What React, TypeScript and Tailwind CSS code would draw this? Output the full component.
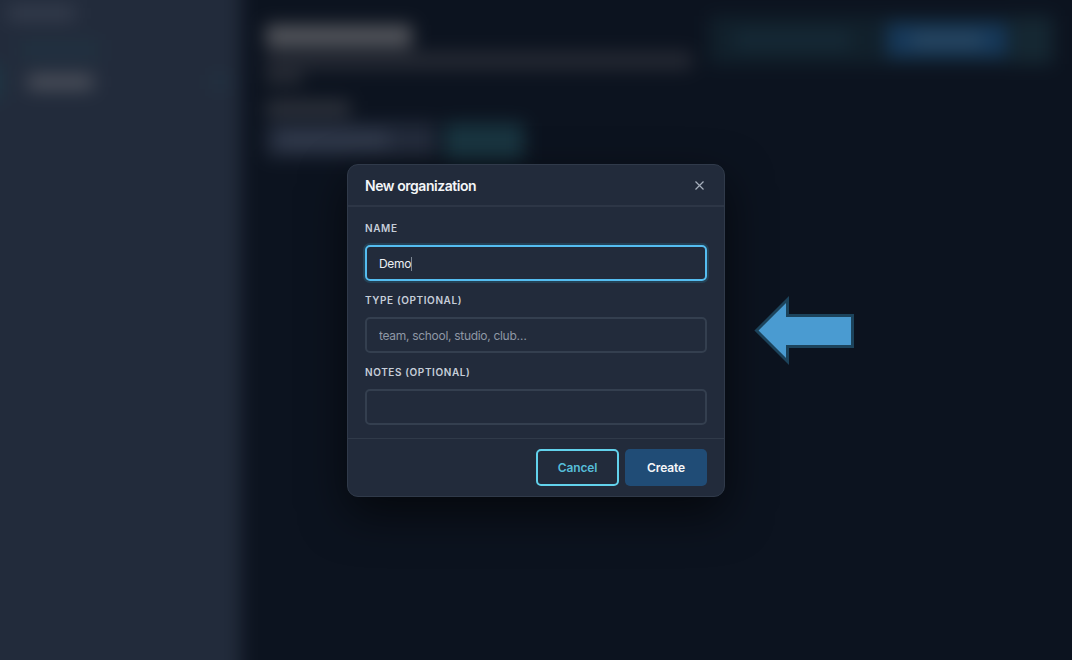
import { ReactElement, useState } from "react";

interface Field {
    key: string;
    label: string;
    placeholder: string;
}

const fields: Field[] = [
    { key: "name", label: "Name", placeholder: "" },
    { key: "type", label: "Type (optional)", placeholder: "team, school, studio, club…" },
    { key: "notes", label: "Notes (optional)", placeholder: "" },
];

function Sidebar(): ReactElement {
    return (
        <aside className="w-[281px] shrink-0 bg-[#222b3b] pt-10">
            <div className="mt-1.5 ml-12 h-3.5 w-[67px] bg-[#363e4e]" />
            <div className="mt-5 ml-[60px] h-5 w-20 bg-[#213140]" />
            <div className="mt-1 flex h-9 items-center">
                <div className="h-9 w-[43px] bg-[#1f3543]" />
                <div className="ml-[25px] h-[14px] w-[65px] bg-[#50545e]" />
                <div className="mr-4 ml-auto h-4 w-3 bg-[#213443]" />
            </div>
        </aside>
    );
}

function Workspace(): ReactElement {
    return (
        <main className="flex flex-1 items-start justify-between pt-10 pr-[59px] pl-[25px]">
            <div className="pt-[25px]">
                <div className="h-[22px] w-[146px] bg-[#54565c]" />
                <div className="mt-[5px] h-[17px] w-[426px] bg-[#262a34]" />
                <div className="mt-[3px] h-[12px] w-[36px] bg-[#2a2e37]" />
                <div className="mt-[17px] h-[15px] w-[84px] bg-[#30343d]" />
                <div className="mt-[7px] flex gap-[8px]">
                    <div className="flex h-[34px] w-[170px] items-center bg-[#232b3b] pl-3">
                        <div className="h-4 w-[110px] bg-[#323b4d]" />
                    </div>
                    <div className="h-[37px] w-[80px] bg-[#193540]" />
                </div>
            </div>
            <div className="mt-[16px] flex h-[48px] w-[344px] items-center bg-[#11202b] pl-[26px]">
                <div className="h-[16px] w-[115px] bg-[#162a37]" />
                <div className="ml-[37px] flex h-[34px] w-[120px] items-center justify-center bg-[#163859]">
                    <div className="h-3 w-[70px] bg-[#2d4a62]" />
                </div>
                <div className="ml-[5px] h-full flex-1 bg-[#152732]" />
            </div>
        </main>
    );
}

function OrganizationModal(): ReactElement {
    const [values, setValues] = useState<Record<string, string>>({ name: "Demo", type: "", notes: "" });

    return (
        <div className="h-[333px] w-[378px] rounded-[11px] border border-[#303a4a] bg-[#222b3b] shadow-[0_17px_46px_rgba(0,0,0,0.6)]">
            <div className="flex h-[42px] items-center justify-between border-b-2 border-[#2d3646] pr-[20px] pl-[17px]">
                <h2 className="text-[14px] font-semibold tracking-[-0.45px] text-[#f4f6f8]">New organization</h2>
                <button aria-label="Close">
                    <svg width="9" height="9" viewBox="0 0 9 9" fill="none" stroke="#a6afbc" strokeWidth="1.2">
                        <path d="M.5.5 8.5 8.5M8.5.5.5 8.5" />
                    </svg>
                </button>
            </div>
            <div className="h-[231px] px-[17px] pt-[14px]">
                {fields.map((field) => (
                    <div key={field.key} className="h-[72px]">
                        <label className="block h-[24px] text-[10px] leading-[14px] font-semibold tracking-[0.6px] text-[#c6ced9] uppercase">
                            {field.label}
                        </label>
                        {field.key === "name" ? (
                            // Active field, with its text caret
                            <div className="flex h-[36px] items-center rounded-[5px] border-2 border-[#55bdf0] px-[12px] pt-[1px] text-[12px] tracking-[-0.3px] text-[#eceff3] shadow-[0_0_0_2px_#244256]">
                                {values.name}
                                <span className="h-[14px] w-px bg-[#7d8793]" />
                            </div>
                        ) : (
                            <input
                                className="block h-[36px] w-full rounded-[5px] border-2 border-[#343f4f] bg-transparent px-[12px] text-[12px] tracking-[-0.3px] text-[#eceff3] outline-none placeholder:text-[#8f98a5]"
                                placeholder={field.placeholder}
                                value={values[field.key]}
                                onChange={(e) => setValues({ ...values, [field.key]: e.target.value })}
                            />
                        )}
                    </div>
                ))}
            </div>
            <div className="flex h-[58px] items-center justify-end gap-[6px] border-t border-[#303a49] pr-[17px] text-[12px] font-semibold tracking-[-0.15px]">
                <button className="h-[37px] w-[83px] rounded-[5px] border-2 border-[#62d2ec] text-[#56bdd8]">Cancel</button>
                <button className="h-[37px] w-[82px] rounded-[5px] bg-[#204c76] text-[#f4f6f8]">Create</button>
            </div>
        </div>
    );
}

function App(): ReactElement {
    return (
        <div className="relative flow-root h-[660px] w-[1072px] overflow-hidden bg-[#0c131f] font-['Inter',sans-serif]">
            {/* Bleeds past the window so that the blur has no pale rim */}
            <div className="-m-10 flex h-[740px] bg-[#0c131f] blur-[9px]">
                <Sidebar />
                <Workspace />
            </div>
            <div className="absolute inset-0 flex items-start justify-center pt-[164px]">
                <OrganizationModal />
            </div>
            {/* Pointer towards the dialog */}
            <svg className="absolute top-[295px] left-[753px]" width="102" height="72" viewBox="0 0 102 72">
                <path
                    d="M3.5 35.5 34.5 4.5V20.5H99.5V51.5H34.5V66.5Z"
                    fill="#4a9bd1"
                    stroke="#1c435b"
                    strokeWidth="3"
                />
            </svg>
        </div>
    );
}

export default App;
